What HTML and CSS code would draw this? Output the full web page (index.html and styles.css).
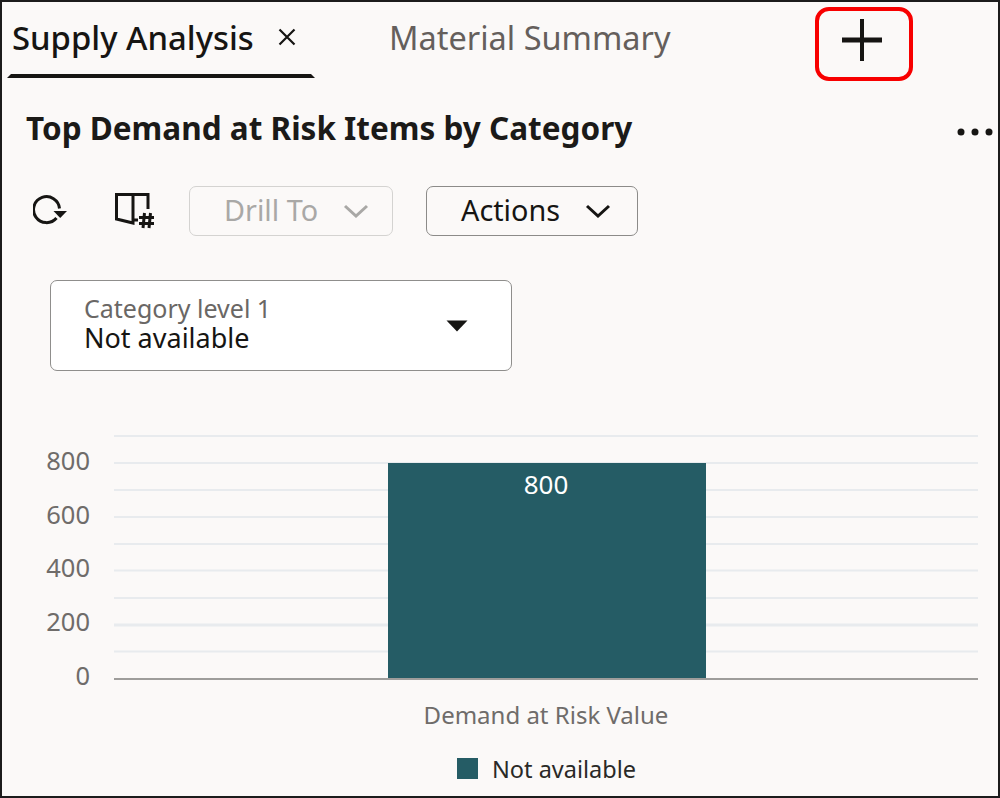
FILE: index.html
```html
<!DOCTYPE html>
<html lang="en">
<head>
<meta charset="utf-8">
<title>Supply Analysis</title>
<link rel="stylesheet" href="styles.css">
</head>
<body>
<main class="frame">
  <nav class="tabs">
    <div class="tab tab-active">
      <span class="tab-label">Supply Analysis</span>
      <svg class="tab-close" width="20" height="20" viewBox="0 0 20 20"><path d="M2.500 2.500L17.500 17.500M17.500 2.500L2.500 17.500" stroke="#161513" stroke-width="2.200" fill="none"/></svg>
    </div>
    <div class="tab tab-second"><span class="tab-label">Material Summary</span></div>
    <div class="tab-add">
      <svg class="plus" width="42" height="44" viewBox="0 0 42 44"><path d="M1 22H41" stroke="#161513" stroke-width="5" fill="none"/><path d="M21 1V43" stroke="#161513" stroke-width="4" fill="none"/></svg>
    </div>
  </nav>

  <header class="title-row">
    <h1 class="title">Top Demand at Risk Items by Category</h1>
    <svg class="more" width="36" height="8" viewBox="0 0 36 8"><circle cx="4" cy="4" r="3.500"/><circle cx="18" cy="4" r="3.500"/><circle cx="32" cy="4" r="3.500"/></svg>
  </header>

  <div class="toolbar">
    <svg class="icon-refresh" width="36" height="36" viewBox="0 0 36 36"><path d="M26.500 15.500A13 13 0 1 0 23.500 25" fill="none" stroke="#161513" stroke-width="3"/><path d="M20.500 18H34L27.200 25Z" fill="#161513"/></svg>
    <svg class="icon-book" width="42" height="40" viewBox="0 0 42 40"><path d="M19 5.500H2.500V30L19 34V5.500ZM19 5.500H34V20M19 31H24" fill="none" stroke="#161513" stroke-width="3"/><path d="M25 28.500H40M25 34.500H40M30.500 24L29 39M36.500 24L35 39" fill="none" stroke="#161513" stroke-width="3"/></svg>
    <div class="btn btn-disabled"><span class="btn-text">Drill To</span>
      <svg width="26" height="14" viewBox="0 0 26 14"><path d="M2 2L13 12L24 2" fill="none" stroke="#a9a8a6" stroke-width="3"/></svg>
    </div>
    <div class="btn btn-actions"><span class="btn-text">Actions</span>
      <svg width="26" height="14" viewBox="0 0 26 14"><path d="M2 2L13 12L24 2" fill="none" stroke="#161513" stroke-width="3"/></svg>
    </div>
  </div>

  <div class="select">
    <div class="select-text">
      <span class="select-label">Category level 1</span>
      <span class="select-value">Not available</span>
    </div>
    <svg class="select-caret" width="22" height="12" viewBox="0 0 22 12"><path d="M0.500 0.500H21.500L11 11.500Z" fill="#161513"/></svg>
  </div>

  <svg class="chart" width="996" height="376" viewBox="0 0 996 376">
    <g class="grid">
      <line x1="112" x2="976" y1="15" y2="15"/>
      <line x1="112" x2="976" y1="42" y2="42"/>
      <line x1="112" x2="976" y1="69" y2="69"/>
      <line x1="112" x2="976" y1="96" y2="96"/>
      <line x1="112" x2="976" y1="123" y2="123"/>
      <line x1="112" x2="976" y1="149.500" y2="149.500"/>
      <line x1="112" x2="976" y1="177" y2="177"/>
      <line x1="112" x2="976" y1="204" y2="204" class="grid-strong"/>
      <line x1="112" x2="976" y1="230.500" y2="230.500"/>
    </g>
    <rect class="bar" x="386" y="42" width="318" height="215"/>
    <line class="axis" x1="112" x2="976" y1="258" y2="258"/>
    <g class="ticks">
      <text x="88" y="49">800</text>
      <text x="88" y="103">600</text>
      <text x="88" y="156">400</text>
      <text x="88" y="210">200</text>
      <text x="88" y="264">0</text>
    </g>
    <text class="bar-label" x="544" y="73">800</text>
    <text class="x-label" x="544" y="303">Demand at Risk Value</text>
    <rect class="bar" x="455" y="337" width="21" height="21"/>
    <text class="legend-label" x="490" y="357">Not available</text>
  </svg>
</main>
</body>
</html>
```
FILE: styles.css
```css
* { box-sizing: border-box; }
html, body { margin: 0; padding: 0; }
body {
  width: 1000px;
  height: 798px;
  overflow: hidden;
  font-family: "Noto Sans", "Open Sans", sans-serif;
  color: #161513;
  background: #fbf9f8;
}
.frame {
  width: 1000px;
  height: 798px;
  border: 2px solid #1c1c1c;
  background: #fbf9f8;
  display: flex;
  flex-direction: column;
}
.tabs {
  height: 76px;
  flex: none;
  display: flex;
  align-items: flex-start;
}
.tab {
  height: 76px;
  display: flex;
  align-items: flex-start;
  padding-top: 15px;
}
.tab-label {
  font-size: 32.500px;
  line-height: 42px;
  white-space: nowrap;
}
.tab-active {
  width: 308px;
  margin-left: 5px;
  padding-left: 1px;
  border-bottom: 4px solid #161513;
  border-left: 4px solid transparent;
  border-right: 4px solid transparent;
  gap: 23px;
}
.tab-active .tab-label { font-size: 32.800px; font-weight: 500; }
.tab-close { margin-top: 10px; }
.tab-second {
  margin-left: 74px;
}
.tab-second .tab-label { color: #655f5c; }
.tab-add {
  width: 98px;
  height: 74px;
  margin-top: 5px;
  margin-left: 144px;
  border: 4px solid #f80000;
  border-radius: 14px;
  display: flex;
  align-items: center;
  justify-content: center;
}
.plus { margin: 0 4px 8px 0; }
.title-row {
  flex: none;
  height: 56px;
  margin-top: 22px;
  padding: 0 5px 0 24px;
  display: flex;
  justify-content: space-between;
  align-items: center;
}
.title {
  margin: 0;
  font-size: 31.500px;
  line-height: 56px;
  font-weight: 700;
  color: #1b1a18;
}
.more { margin-top: 8px; fill: #161513; }
.toolbar {
  flex: none;
  height: 50px;
  margin-top: 30px;
  padding-left: 31px;
  display: flex;
  align-items: center;
}
.icon-refresh { margin-right: 45px; }
.icon-book { margin-right: 33px; margin-top: -5px; }
.btn {
  height: 50px;
  border-radius: 7px;
  border: 1.500px solid #8c8b89;
  display: flex;
  align-items: center;
  font-size: 28.800px;
  gap: 25px;
  padding-left: 34px;
}
.btn-text { margin-bottom: 4px; }
.btn-disabled {
  width: 204px;
  color: #a9a8a6;
  border-color: #d4d3d1;
  margin-right: 33px;
}
.btn-actions { width: 212px; }
.select {
  flex: none;
  width: 462px;
  height: 91px;
  margin: 44px 0 0 48px;
  padding: 0 43px 0 33px;
  background: #fff;
  border: 1.500px solid #8f8e8c;
  border-radius: 7px;
  display: flex;
  align-items: center;
  justify-content: space-between;
}
.select-text { display: flex; flex-direction: column; padding-bottom: 6px; }
.select-label { font-size: 25px; line-height: 30px; color: #6a6765; }
.select-value { font-size: 27px; line-height: 30px; color: #161513; }
.chart { flex: none; display: block; margin-top: 50px; }
.grid line { stroke: #e8ebee; stroke-width: 2; }
.grid .grid-strong { stroke-width: 3; }
.axis { stroke: #9e9d9b; stroke-width: 2; }
.bar { fill: #255c65; }
.ticks text { font-size: 25.500px; fill: #6f6c6a; text-anchor: end; }
.bar-label { font-size: 26px; fill: #fff; text-anchor: middle; }
.x-label { font-size: 24px; fill: #6f6c6a; text-anchor: middle; }
.legend-label { font-size: 23.500px; fill: #2a2927; }
```
